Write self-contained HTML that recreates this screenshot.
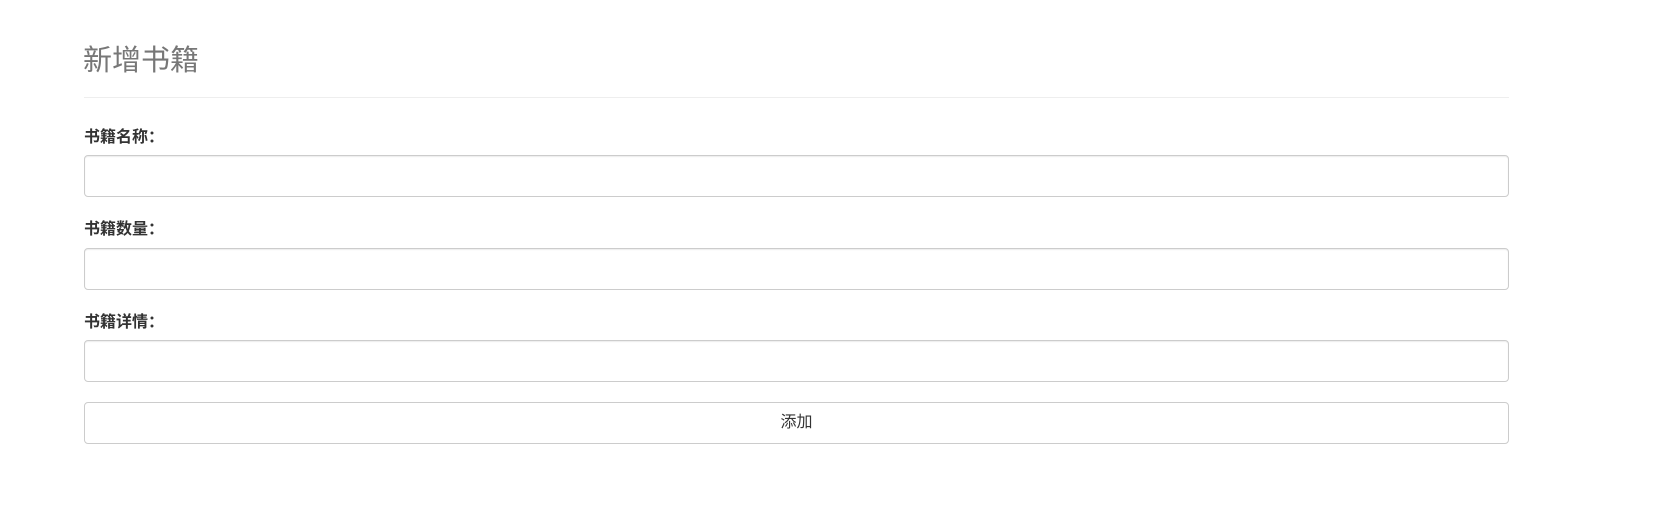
<!DOCTYPE html>
<html><head><meta charset="utf-8"><style>
body{margin:0;background:#fff;font-family:"Liberation Sans","Noto Sans CJK SC",sans-serif;width:1666px;height:526px;position:relative;overflow:hidden}
.a{position:absolute}
h1{position:absolute;left:83px;top:41px;margin:0;font-weight:400;font-size:29px;color:#777;line-height:40px}
.hr{left:84px;width:1425px;top:97px;height:1px;background:#eee}
.l{left:84px;font-weight:700;font-size:16px;color:#333;line-height:20px}
.i{left:84px;width:1423px;height:40px;border:1px solid #ccc;border-radius:4px;box-shadow:inset 0 1px 1px rgba(0,0,0,.075)}
.b{left:84px;width:1423px;height:40px;border:1px solid #ccc;border-radius:4px;text-align:center;line-height:40px;font-size:16px;color:#333}
</style></head><body>
<h1>新增书籍</h1>
<div class="a hr"></div>
<div class="a l" style="top:128px">书籍名称：</div>
<div class="a i" style="top:155px"></div>
<div class="a l" style="top:220px">书籍数量：</div>
<div class="a i" style="top:248px"></div>
<div class="a l" style="top:313px">书籍详情：</div>
<div class="a i" style="top:340px"></div>
<div class="a b" style="top:402px">添加</div>
</body></html>
